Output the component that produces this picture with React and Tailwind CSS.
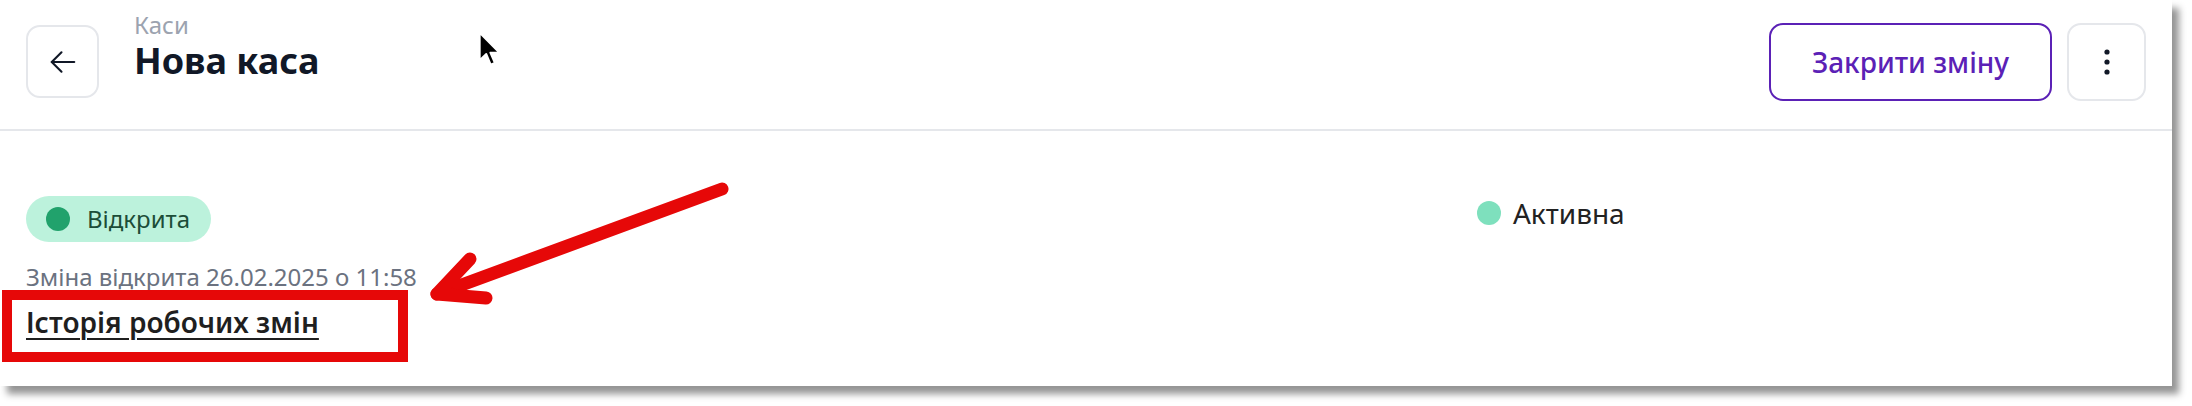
import React from "react";

function BackIcon() {
  return (
    <svg width="36" height="36" viewBox="0 0 24 24" fill="none" stroke="#111827" strokeWidth="1.4" strokeLinecap="round" strokeLinejoin="round">
      <path d="M19.5 12H4.5" />
      <path d="M11 18.5L4.5 12 11 5.5" />
    </svg>
  );
}

function DotsIcon() {
  return (
    <svg width="8" height="28" viewBox="0 0 8 28" fill="#111827">
      <circle cx="4" cy="4" r="2.6" />
      <circle cx="4" cy="14" r="2.6" />
      <circle cx="4" cy="24" r="2.6" />
    </svg>
  );
}

function Cursor() {
  return (
    <svg className="absolute left-[478px] top-[31px]" width="24" height="36" viewBox="0 0 14 21">
      <path d="M1 1 L1 17 L4.8 13.4 L7.4 19.6 L9.8 18.6 L7.2 12.6 L12.4 12.6 Z" fill="#000" stroke="#fff" strokeWidth="1.1" strokeLinejoin="round" />
    </svg>
  );
}

function Annotation() {
  return (
    <>
      <div className="absolute left-[2px] top-[290px] w-[406px] h-[72px] border-[10px] border-[#e60808]" />
      <svg className="absolute left-0 top-0 pointer-events-none" width="2192" height="406">
        <g stroke="#e60808" strokeWidth="13" strokeLinecap="round" strokeLinejoin="round" fill="none">
          <path d="M722 189 L437 294" />
          <path d="M470 259 L437 294 L486 298" />
        </g>
      </svg>
    </>
  );
}

export default function App() {
  return (
    <div className="relative w-[2192px] h-[406px] bg-white overflow-hidden" style={{ fontFamily: '"Noto Sans", "Open Sans", sans-serif' }}>
      <div className="w-[2172px] h-[386px] bg-white shadow-[7px_8px_7px_rgba(0,0,0,0.42)]">
        <div className="flex items-start justify-between h-[131px] border-b-2 border-[#e5e7eb] pl-[26px] pr-[26px]">
          <div className="flex items-start">
            <button className="mt-[25px] w-[73px] h-[73px] flex items-center justify-center rounded-[14px] border-2 border-[#e5e7eb] bg-white">
              <BackIcon />
            </button>
            <div className="ml-[35px] mt-[11px]">
              <div className="text-[24px] leading-[28px] text-[#9ca3af]">Каси</div>
              <div className="mt-[2px] text-[36px] leading-[40px] font-bold text-[#111827]">Нова каса</div>
            </div>
          </div>
          <div className="flex items-start gap-[15px] mt-[23px]">
            <button className="h-[78px] w-[283px] rounded-[14px] border-2 border-[#5b21b6] text-[28px] font-medium text-[#5b21b6]">
              Закрити зміну
            </button>
            <button className="h-[78px] w-[79px] flex items-center justify-center rounded-[14px] border-2 border-[#e5e7eb]">
              <DotsIcon />
            </button>
          </div>
        </div>

        <div className="grid grid-cols-[1451px_1fr] items-start pl-[26px] pt-[65px]">
          <div className="flex flex-col items-start">
            <div className="h-[46px] flex items-center gap-[17px] rounded-full bg-[#bcf2dc] pl-[20px] pr-[21px]">
              <span className="w-[24px] h-[24px] rounded-full bg-[#21a26c]" />
              <span className="text-[24px] leading-[32px] text-[#1c4d38]">Відкрита</span>
            </div>
            <div className="mt-[19px] text-[24px] leading-[32px] text-[#6b7280]">
              Зміна відкрита 26.02.2025 о 11:58
            </div>
            <a className="mt-[13px] text-[28px] leading-[32px] font-semibold text-[#1f1f1f] underline decoration-2 underline-offset-[5px]">
              Історія робочих змін
            </a>
          </div>
          <div className="mt-[1px] flex items-center gap-[12px]">
            <span className="w-[24px] h-[24px] rounded-full bg-[#7ee0bd]" />
            <span className="text-[28px] leading-[32px] text-[#222]">Активна</span>
          </div>
        </div>
      </div>
      <Cursor />
      <Annotation />
    </div>
  );
}
